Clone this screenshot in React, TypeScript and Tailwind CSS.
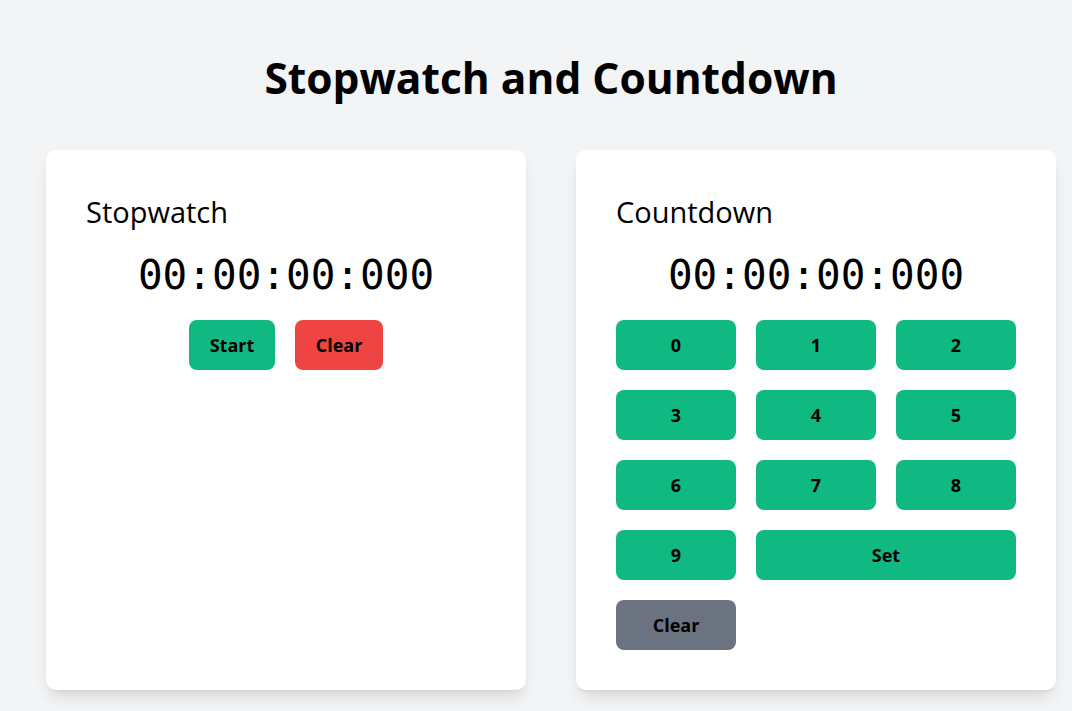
import type { ReactNode } from "react";

const SANS = "font-['Open_Sans','Noto_Sans',sans-serif]";

function Btn({ children, className }: { children: ReactNode; className: string }) {
  return (
    <button
      className={`h-[50px] rounded-lg text-[18px] font-bold text-black flex items-center justify-center ${className}`}
    >
      {children}
    </button>
  );
}

function Card({ title, children }: { title: string; children: ReactNode }) {
  return (
    <div className="w-[480px] rounded-[10px] bg-white p-10 shadow-lg">
      <h2 className="text-[29px] leading-[44px] text-black">{title}</h2>
      <div className="mt-[15px] text-center font-['DejaVu_Sans_Mono',monospace] text-[41px] leading-[52px] text-black">
        00:00:00:000
      </div>
      <div className="mt-[19px]">{children}</div>
    </div>
  );
}

export default function App() {
  return (
    <div className={`min-h-[711px] bg-[#f3f4f6] ${SANS}`}>
      <div className="ml-[46px] w-[1010px] pt-[48px]">
        <h1 className="text-center text-[42.5px] font-bold leading-[60px] text-black">
          Stopwatch and Countdown
        </h1>
        <div className="mt-[42px] flex gap-[50px]">
          <Card title="Stopwatch">
            <div className="flex justify-center gap-5">
              <Btn className="w-[86px] bg-[#10b981]">Start</Btn>
              <Btn className="w-[88px] bg-[#ef4444]">Clear</Btn>
            </div>
          </Card>
          <Card title="Countdown">
            <div className="grid grid-cols-3 gap-5">
              {["0", "1", "2", "3", "4", "5", "6", "7", "8", "9"].map((d) => (
                <Btn key={d} className="bg-[#10b981]">
                  {d}
                </Btn>
              ))}
              <Btn className="col-span-2 bg-[#10b981]">Set</Btn>
              <Btn className="bg-[#6b7280]">Clear</Btn>
            </div>
          </Card>
        </div>
      </div>
    </div>
  );
}
